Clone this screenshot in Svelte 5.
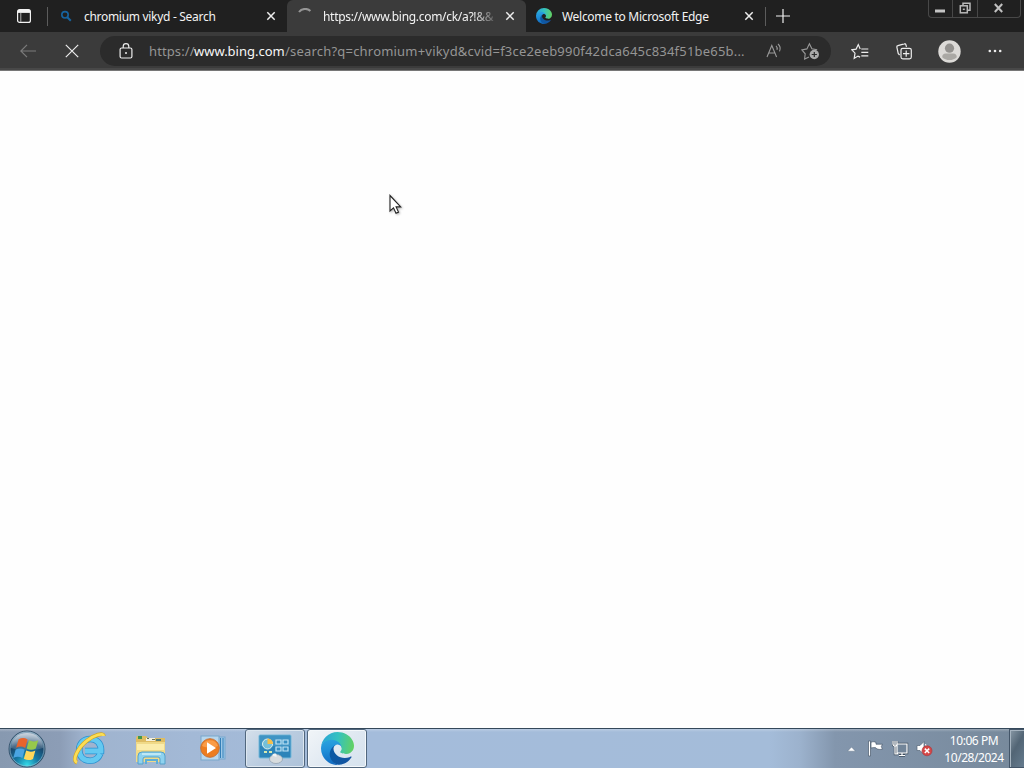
<script>
    let tabs = [
        { id: 1, icon: 'search', title: 'chromium vikyd - Search', active: false },
        { id: 2, icon: 'spinner', title: 'https://www.bing.com/ck/a?!&&', active: true },
        { id: 3, icon: 'edge', title: 'Welcome to Microsoft Edge', active: false }
    ];

    let url = {
        scheme: 'https://',
        host: 'www.bing.com',
        rest: '/search?q=chromium+vikyd&cvid=f3ce2eeb990f42dca645c834f51be65b...'
    };

    let time = '10:06 PM';
    let date = '10/28/2024';
</script>

{#snippet edgeLogo(id, size)}
    <svg width={size} height={size} viewBox="0 0 256 256">
        <defs>
            <linearGradient id="{id}-a" x1="0" y1="0" x2="1" y2="0">
                <stop offset="0" stop-color="#0c59a4" />
                <stop offset="1" stop-color="#1454a0" />
            </linearGradient>
            <linearGradient id="{id}-b" x1="0.4" y1="0" x2="0.5" y2="1">
                <stop offset="0" stop-color="#2ba5df" />
                <stop offset="0.45" stop-color="#1e8ed8" />
                <stop offset="1" stop-color="#1068bf" />
            </linearGradient>
            <linearGradient id="{id}-c" x1="0" y1="0.4" x2="1" y2="0.5">
                <stop offset="0" stop-color="#2aa4d8" />
                <stop offset="0.5" stop-color="#34c2bf" />
                <stop offset="1" stop-color="#62d162" />
            </linearGradient>
        </defs>
        <path fill="url(#{id}-a)" d="M231 190.5c-3.4 1.8-6.9 3.4-10.5 4.7a101.4 101.4 0 0 1-35.7 6.4c-47 0-88-32.4-88-73.9a31.4 31.4 0 0 1 16.4-27.3c-42.6 1.8-53.5 46.2-53.5 72.1 0 73.5 67.7 80.9 82.3 80.9 7.8 0 19.7-2.3 26.7-4.6l1.4-.4a128 128 0 0 0 66.6-52.7 4 4 0 0 0-5.7-5.2z" />
        <path fill="url(#{id}-b)" d="M105.7 241.6a79.2 79.2 0 0 1-22.7-21.4 80.7 80.7 0 0 1 29.5-120c3.2-1.5 8.5-4.1 15.6-4a32.4 32.4 0 0 1 25.7 13 31.9 31.9 0 0 1 6.3 18.7c0-.2 24.5-79.6-80-79.6-43.9 0-80 41.7-80 78.2a130.2 130.2 0 0 0 12.1 56 128 128 0 0 0 156.4 67.1 75.5 75.5 0 0 1-62.8-8z" />
        <path fill="url(#{id}-c)" d="M152.3 148.9c-.8 1-3.3 2.5-3.3 5.7 0 2.6 1.7 5.1 4.7 7.2 14.4 10 41.5 8.7 41.6 8.7a59.6 59.6 0 0 0 30.3-8.3 61.4 61.4 0 0 0 30.4-52.9c.3-22.4-8-37.3-11.3-43.9C223.5 23.9 177.7 0 128 0A128 128 0 0 0 0 126.2c.5-36.5 36.8-66 80-66 3.5 0 23.5.3 42 10a72.6 72.6 0 0 1 30.9 29.3c6.1 10.6 7.2 24.1 7.2 29.5s-2.7 13.3-7.8 19.9z" />
    </svg>
{/snippet}

<div class="desktop">
    <header class="tab-strip">
        <div class="tab-actions">
            <svg width="16" height="16" viewBox="0 0 16 16" fill="none" stroke="#f2f2f2" stroke-width="1.2">
                <rect x="1.6" y="1.6" width="12.8" height="12.8" rx="2" />
                <path d="M2 3.4h12" stroke-width="3" />
                <path d="M4.8 5v9" stroke="#b0b0b0" stroke-width="1" />
            </svg>
        </div>
        <div class="divider"></div>

        {#each tabs as tab (tab.id)}
            <div class="tab" class:active={tab.active}>
                <div class="favicon">
                    {#if tab.icon === 'search'}
                        <svg width="16" height="16" viewBox="0 0 16 16" fill="none" stroke="#1764a0">
                            <circle cx="7" cy="6.8" r="3.2" stroke-width="1.6" />
                            <path d="M9.3 9.2l3.5 3.5" stroke-width="2" />
                        </svg>
                    {:else if tab.icon === 'spinner'}
                        <svg width="16" height="16" viewBox="0 0 16 16" fill="none">
                            <path d="M2 4C4.8.2 10.5-.1 13.4 3" stroke="#969696" stroke-width="2" />
                        </svg>
                    {:else}
                        {@render edgeLogo('tab-edge', 16)}
                    {/if}
                </div>
                <span class="title">{tab.title}</span>
                <svg class="close" width="10" height="10" viewBox="0 0 10 10" stroke="#ededed" stroke-width="1.5">
                    <path d="M1.3 1.3l7.4 7.4M8.7 1.3L1.3 8.7" />
                </svg>
            </div>
        {/each}

        <div class="divider"></div>
        <svg class="new-tab" width="14" height="14" viewBox="0 0 14 14" stroke="#f0f0f0" stroke-width="1.2">
            <path d="M7 0v14M0 7h14" />
        </svg>

        <div class="window-controls">
            <div class="control minimize">
                <svg width="12" height="4" viewBox="0 0 12 4"><rect x="1" y="0.5" width="10" height="3" fill="#c4c4c4" /></svg>
            </div>
            <div class="control restore">
                <svg width="12" height="12" viewBox="0 0 12 12" fill="none" stroke="#b8b8b8" stroke-width="1.5">
                    <path d="M4 3V1.3h7v7H9" />
                    <rect x="1.3" y="3.8" width="7" height="7" />
                    <path d="M3.8 7.3h2" />
                </svg>
            </div>
            <div class="control exit">
                <svg width="11" height="10" viewBox="0 0 11 10" stroke="#c0c0c0" stroke-width="2">
                    <path d="M1.8 1l7.4 8M9.2 1L1.8 9" />
                </svg>
            </div>
        </div>
    </header>

    <nav class="toolbar">
        <svg class="back" width="16" height="14" viewBox="0 0 16 14" fill="none" stroke="#7c7c7c" stroke-width="1.2">
            <path d="M7 .8L.8 7 7 13.2M1 7h15" />
        </svg>
        <svg class="stop" width="14" height="14" viewBox="0 0 14 14" stroke="#ececec" stroke-width="1.2">
            <path d="M.8.8l12.4 12.4M13.2.8L.8 13.2" />
        </svg>

        <div class="address-bar">
            <svg class="lock" width="14" height="16" viewBox="0 0 14 16" fill="none" stroke="#ededed" stroke-width="1.2">
                <rect x="1.1" y="5" width="11.8" height="10" rx="1.5" />
                <path d="M4.2 5V3.5a2.8 2.8 0 0 1 5.6 0V5" />
                <circle cx="7" cy="10" r="1" fill="#ededed" stroke="none" />
            </svg>
            <div class="url"><span class="scheme">{url.scheme}</span><span class="host">{url.host}</span><span class="rest">{url.rest}</span></div>
            <svg class="read-aloud" width="18" height="16" viewBox="0 0 18 16" fill="none" stroke="#999" stroke-width="1.1">
                <path d="M1 14L5.8 2.5 10.6 14M2.8 10h6" />
                <path d="M10 2.8c1.2 1.1 1.4 2.6 1 4.1M12 1c2 1.7 2.6 4.7 1.5 7.4" />
            </svg>
            <svg class="add-favorite" width="19" height="18" viewBox="0 0 19 18" fill="none" stroke="#999" stroke-width="1.1">
                <path d="M8 15l-4.4 2 .6-5.2L.8 7.9l5.1-1L8.4 1.7l2.5 5.1 5.3.9" />
                <circle cx="13.3" cy="12.5" r="4.7" fill="#aaa" stroke="none" />
                <path d="M13.3 9.9v5.2M10.7 12.5h5.2" stroke="#2b2b2b" stroke-width="1.2" />
            </svg>
        </div>

        <svg class="favorites" width="18" height="17" viewBox="0 0 18 17" fill="none" stroke="#ededed" stroke-width="1.2">
            <path d="M9.2 5.9L7.3 1.6 5.1 6.1.8 6.8 4 10.2l-.8 5.1L7 13.1l2.1 1M10.3 6h7M10.3 9.4h7M10.3 12.8h7" />
        </svg>
        <svg class="collections" width="16" height="17" viewBox="0 0 16 17" fill="none" stroke="#ededed" stroke-width="1.2">
            <path d="M3.6 12L2.2 10.4.9 4.3c-.2-.9.2-1.4 1-1.6L8.2.9c.9-.3 1.4 0 1.7.9l.6 2" />
            <rect x="5" y="5.3" width="10.3" height="10.6" rx="1.8" fill="#3b3b3b" />
            <path d="M10.2 7.4v6.4M7 10.6h6.4" />
        </svg>
        <svg class="profile" width="23" height="23" viewBox="0 0 23 23">
            <circle cx="11.5" cy="11.5" r="11.2" fill="#dcdad7" />
            <circle cx="11.5" cy="8.2" r="4.6" fill="#93918e" />
            <path d="M4.2 17.2c0-2.7 1.4-3.8 3.4-3.8h7.8c2 0 3.4 1.1 3.4 3.8-1.8 1.8-4.5 2.9-7.3 2.9s-5.5-1.1-7.3-2.9z" fill="#aaa8a4" />
        </svg>
        <svg class="more" width="14" height="4" viewBox="0 0 14 4" fill="#ededed">
            <circle cx="1.8" cy="2" r="1.3" />
            <circle cx="7" cy="2" r="1.3" />
            <circle cx="12.2" cy="2" r="1.3" />
        </svg>
    </nav>

    <main class="page"></main>

    <footer class="taskbar">
        <div class="start">
            <svg width="38" height="38" viewBox="0 0 38 38">
                <defs>
                    <radialGradient id="orb" cx="0.5" cy="0.95" r="0.9">
                        <stop offset="0" stop-color="#35dce9" />
                        <stop offset="0.35" stop-color="#157ba5" />
                        <stop offset="0.7" stop-color="#1b466b" />
                        <stop offset="1" stop-color="#819bb4" />
                    </radialGradient>
                    <linearGradient id="shine" x1="0" y1="0" x2="0" y2="1">
                        <stop offset="0" stop-color="#fff" stop-opacity="0.6" />
                        <stop offset="1" stop-color="#fff" stop-opacity="0.1" />
                    </linearGradient>
                </defs>
                <circle cx="19" cy="19" r="18" fill="url(#orb)" stroke="#35536c" stroke-width="1" />
                <circle cx="19" cy="19" r="17" fill="none" stroke="#9bc1d4" stroke-opacity="0.6" />
                <path d="M3 18C3 9 10 3 19 3s16 6 16 15c-9 3-22 3-32 0z" fill="url(#shine)" />
                <g transform="translate(19 19) scale(1.18) translate(-18.7 -19)">
                    <path d="M11.6 10.7c3-1.5 5.3-1.2 7.6.2l-2 7.2c-2.6-1.4-4.9-1.5-7.7-.2z" fill="#e8642c" />
                    <path d="M20.4 11.6c2.7 1.3 5 1.3 7.8-.1l-2 7.1c-2.7 1.4-5.2 1.4-7.8 0z" fill="#96c94c" />
                    <path d="M9.1 19.5c2.9-1.4 5.2-1.2 7.7.1l-2 7.1c-2.6-1.4-4.9-1.4-7.7-.1z" fill="#4aa5e2" />
                    <path d="M18 20.3c2.7 1.3 5.1 1.3 7.8-.1l-2 7.2c-2.7 1.4-5.2 1.3-7.8-.1z" fill="#ffd75a" />
                </g>
            </svg>
        </div>

        <div class="pinned explorer">
            <svg width="34" height="34" viewBox="0 0 34 34" fill="none">
                <path d="M28.2 21.8c-1.9 4.6-5.4 7-10 7-6.8 0-11-4.4-11-11C7.2 11.5 11.7 7 18.2 7c6.8 0 11.2 4.7 10.8 12H13" stroke="#2b91d0" stroke-width="6.6" />
                <path d="M28.2 21.8c-1.9 4.6-5.4 7-10 7-6.8 0-11-4.4-11-11C7.2 11.5 11.7 7 18.2 7c6.8 0 11.2 4.7 10.8 12H13" stroke="#64c9f1" stroke-width="5" />
                <path d="M5 30.5C-.4 28.5 5.6 15.8 15 8.6 22.4 2.9 31.6.3 31.6 4" stroke="#d3a423" stroke-width="4" />
                <path d="M5 30.5C-.4 28.5 5.6 15.8 15 8.6 22.4 2.9 31.6.3 31.6 4" stroke="#fbdd55" stroke-width="2.8" />
            </svg>
        </div>

        <div class="pinned folder">
            <svg width="34" height="30" viewBox="0 0 34 30">
                <path d="M2 3l1-2h9l2 2h17v24H2z" fill="#dfbd62" />
                <path d="M4 1h4v3H4z" fill="#42964c" />
                <path d="M12 3h9v3h-9z" fill="#f6f1db" />
                <path d="M13 3h2v1h-2zM18 4h3v1h-3z" fill="#6c7457" />
                <path d="M22 4h5v2h-5z" fill="#537b75" />
                <path d="M2 7h29v20H2z" fill="#f0da88" />
                <path d="M3 9h27v6H3z" fill="#fbedac" />
                <path d="M4 29v-8q0-4 4-4h19q4 0 4 4v8h-5v-5q0-2-2-2H11q-2 0-2 2v5z" fill="#8ed2ef" stroke="#54a1ca" />
                <path d="M12 29v-4h11v4" fill="none" stroke="#5baed8" stroke-width="2" />
                <path d="M8 19h19" stroke="#d9f5fb" stroke-width="1.3" />
            </svg>
        </div>

        <div class="pinned player">
            <svg width="28" height="27" viewBox="0 0 28 27">
                <rect x="8" y="2" width="18" height="22" fill="#9ec9e8" stroke="#77a7cf" />
                <path d="M21.5 3v20M24 3v20" stroke="#337fb8" stroke-width="1" />
                <rect x="2" y="1" width="18" height="24" fill="#b8d7ed" stroke="#7aa7cb" />
                <circle cx="11" cy="13" r="9.3" fill="#ed7d20" stroke="#c77439" />
                <path d="M3 11a8.4 8.4 0 0 1 16 0c-5 2-11 2-16 0z" fill="#fa9c48" />
                <path d="M8 7.2v11.6l9-5.8z" fill="#fff" />
            </svg>
        </div>

        <div class="task">
            <svg width="34" height="30" viewBox="0 0 34 30">
                <rect x="1" y="1" width="32" height="23" rx="1" fill="#2c84b9" stroke="#75b9da" />
                <path d="M2 2h30v10H2z" fill="#52a4d0" fill-opacity="0.5" />
                <circle cx="9.5" cy="10" r="5" fill="#74bfd9" stroke="#e0f1ef" />
                <path d="M9.5 10V4.5A5.4 5.4 0 0 1 15 10z" fill="#f5be49" />
                <path d="M6 18h3M11 18h3" stroke="#d8e9ad" stroke-width="2" />
                <path d="M18 6h5v4h-5zM25 6h5v4h-5zM18 13h5v4h-5zM25 13h5v4h-5z" fill="#378fc2" stroke="#c1e4f5" stroke-width="1.2" />
                <ellipse cx="18" cy="25" rx="6.5" ry="4.5" fill="#d7dcde" stroke="#8b9bab" stroke-width="0.7" />
                <path d="M14 21.5c1-2 3-2.5 4.5-1.5v3z" fill="#f0f3f3" />
            </svg>
        </div>

        <div class="task current">
            {@render edgeLogo('task-edge', 33)}
        </div>

        <div class="tray">
            <svg class="arrow" width="9" height="6" viewBox="0 0 9 6"><path d="M.5 5.2l4-4.2 4 4.2z" fill="#fff" stroke="#60758b" stroke-width="0.5" /></svg>
            <svg class="flag" width="17" height="17" viewBox="0 0 17 17" fill="#fff" stroke="#49596c" stroke-width="0.7">
                <path d="M1.5 1h2v15h-2z" />
                <path d="M4 2.2c1.8-.7 3.6-.6 5 .2v1.8h6.5l-1.2 2.4 1.2 2.5c-2.4.6-4.5.5-6-.5L9 7.9c-1.6-.5-3.3-.4-5 .2z" />
            </svg>
            <svg class="network" width="17" height="17" viewBox="0 0 17 17" fill="none">
                <path d="M5 4h10v9H5zM10 13v2M7 15.5h6M1 1v3c0 1.3 1 2 2 2s2-.7 2-2V1M3 1v4M3 6v8h3" stroke="#3d4c5c" stroke-width="2.4" />
                <path d="M5 4h10v9H5z" fill="#728599" />
                <path d="M5 4h10v9H5zM10 13v2M7 15.5h6M1 1v3c0 1.3 1 2 2 2s2-.7 2-2V1M3 1v4M3 6v8h3" stroke="#fff" stroke-width="1.2" />
            </svg>
            <svg class="volume" width="18" height="17" viewBox="0 0 18 17">
                <path d="M1 5.5h3l4-4v13l-4-4H1z" fill="#fff" stroke="#56677a" stroke-width="0.7" />
                <path d="M9.5 4q2 3.5 0 7" stroke="#fff" fill="none" />
                <circle cx="11" cy="10.8" r="5" fill="#d54747" stroke="#aa3439" stroke-width="0.6" />
                <path d="M8.8 8.6l4.4 4.4M13.2 8.6L8.8 13" stroke="#fff" stroke-width="1.5" />
            </svg>
            <div class="clock">
                <div class="time">{time}</div>
                <div class="date">{date}</div>
            </div>
            <div class="show-desktop"></div>
        </div>
    </footer>

    <svg class="cursor" width="14" height="22" viewBox="0 0 14 22">
        <path d="M1 1.5v15.5l3.5-3.2 2.5 5.4 2.5-1.1-2.4-5.2h4.6z" fill="#fff" stroke="#222" stroke-width="1.1" />
    </svg>
</div>

<style>
    :global(body) {
        margin: 0;
        overflow: hidden;
    }

    .desktop {
        position: relative;
        width: 1024px;
        height: 768px;
        display: flex;
        flex-direction: column;
        background: #fefefe;
        font-family: "Noto Sans", "Open Sans", sans-serif;
        font-size: 12px;
    }

    .desktop * {
        box-sizing: border-box;
    }

    svg {
        display: block;
        flex: none;
    }

    .tab-strip {
        display: flex;
        align-items: center;
        height: 32px;
        flex: none;
        background: #202020;
        color: #f3f3f3;
    }

    .tab-actions {
        width: 47px;
        padding-left: 16px;
    }

    .divider {
        width: 1px;
        height: 19px;
        background: #5c5c5c;
    }

    .tab {
        display: flex;
        align-items: center;
        width: 239px;
        height: 32px;
        padding: 0 11px 0 10px;
        white-space: nowrap;
    }

    .tab.active {
        background: #3b3b3b;
        border-radius: 6px 6px 0 0;
    }

    .favicon {
        width: 16px;
        height: 16px;
        flex: none;
    }

    .title {
        flex: 1;
        margin: 0 8px 0 10px;
        letter-spacing: -0.3px;
    }

    .active .title {
        mask-image: linear-gradient(to right, #000 150px, transparent 176px);
    }

    .new-tab {
        margin-left: 10px;
    }

    .window-controls {
        display: flex;
        align-self: flex-start;
        width: 93px;
        height: 18px;
        margin-left: auto;
        margin-right: 3px;
        border: 1px solid #484848;
        border-top: 0;
        border-radius: 0 0 4px 4px;
    }

    .control {
        display: flex;
        align-items: center;
        justify-content: center;
        width: 24px;
        padding-bottom: 1px;
        border-right: 1px solid #484848;
    }

    .minimize {
        padding: 4px 2px 0 0;
    }

    .restore {
        width: 25px;
        padding-right: 1px;
    }

    .exit {
        flex: 1;
        padding-right: 1px;
        border: 0;
    }

    .toolbar {
        display: flex;
        align-items: center;
        height: 39px;
        flex: none;
        background: #3b3b3b;
        border-bottom: 1px solid #777;
        box-shadow: inset 0 -2px #484848;
    }

    .back {
        margin-left: 20px;
    }

    .stop {
        margin-left: 29px;
    }

    .address-bar {
        display: flex;
        align-items: center;
        width: 731px;
        height: 30px;
        margin-left: 21px;
        padding: 0 12px 0 19px;
        border-radius: 15px;
        background: #2b2b2b;
    }

    .url {
        display: flex;
        width: 597px;
        margin-left: 16px;
        color: #959595;
        font-size: 13px;
        line-height: 18px;
        white-space: nowrap;
    }

    .scheme {
        width: 45px;
        letter-spacing: 0.1px;
    }

    .host {
        width: 91px;
        color: #f7f7f7;
        letter-spacing: 0;
    }

    .rest {
        letter-spacing: 0.2px;
    }

    .read-aloud {
        margin-left: 21px;
    }

    .add-favorite {
        margin-left: 17px;
    }

    .favorites {
        margin-left: 20px;
    }

    .collections {
        margin-left: 27px;
    }

    .profile {
        margin-left: 26px;
    }

    .more {
        margin-left: 27px;
    }

    .page {
        flex: 1;
        background: #fefefe;
    }

    .taskbar {
        display: flex;
        align-items: center;
        height: 40px;
        flex: none;
        border-top: 1px solid #34485a;
        background: linear-gradient(to bottom, rgba(255, 255, 255, 0.25), transparent 3px),
            linear-gradient(to right, #8799b0 0, #8c9db6 60px, #9fb3ce 85px, #a3b9d6 190px, #a4bcdb 370px, #a4bcd9 770px, #9cb2cd 800px, #8396ad 835px, #77899b 1024px);
    }

    .start {
        width: 58px;
        padding-left: 8px;
    }

    .pinned {
        display: flex;
        align-items: center;
        justify-content: center;
        width: 62px;
        height: 39px;
    }

    .folder {
        padding-top: 2px;
    }

    .player {
        width: 63px;
        padding-right: 2px;
    }

    .task {
        display: flex;
        align-items: center;
        justify-content: center;
        width: 60px;
        height: 39px;
        margin-right: 2px;
        border: 1px solid #51677e;
        border-radius: 3px;
        background: linear-gradient(135deg, #d5e0eb, #bacce0 50%, #adc2d9);
        box-shadow: inset 0 0 0 1px #dde7f0;
    }

    .task.current {
        background: linear-gradient(135deg, #f1f5f8, #dfe8f1 55%, #d5e2ee);
        box-shadow: inset 0 0 0 1px #f4f8fb;
    }

    .tray {
        display: flex;
        align-items: center;
        height: 39px;
        margin-left: auto;
        color: #fff;
    }

    .flag {
        margin-left: 11px;
    }

    .network {
        margin-left: 8px;
    }

    .volume {
        margin-left: 7px;
    }

    .clock {
        width: 70px;
        margin-left: 5px;
        text-align: center;
        line-height: 17px;
        letter-spacing: -0.45px;
    }

    .show-desktop {
        width: 15px;
        height: 39px;
        border: 1px solid #435568;
        border-right: 0;
        background: linear-gradient(120deg, #8999a6, #526575 45%, #657b8e);
        box-shadow: inset 1px 1px #a6b4c0;
    }

    .cursor {
        position: absolute;
        left: 389px;
        top: 194px;
        filter: drop-shadow(1px 1px 1px rgba(0, 0, 0, 0.3));
    }
</style>
